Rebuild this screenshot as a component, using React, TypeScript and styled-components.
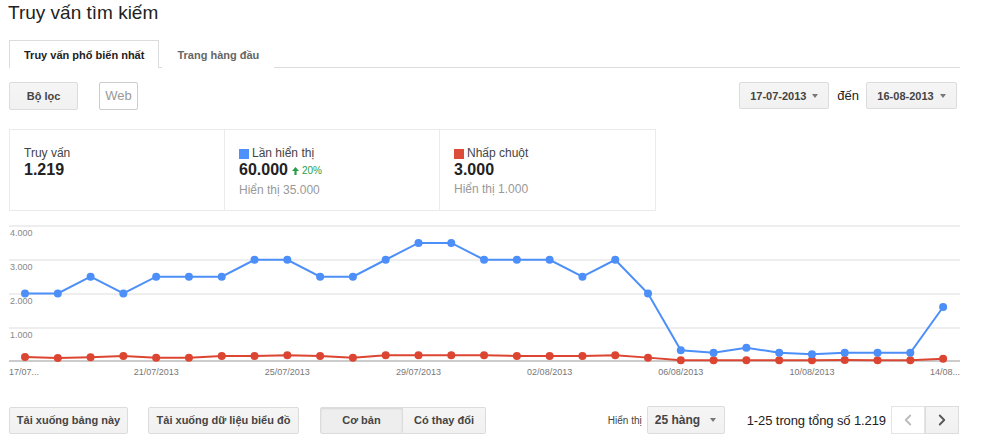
import styled, { createGlobalStyle } from "styled-components"
import { ChevronLeft, ChevronRight } from "lucide-react"

const GlobalStyle = createGlobalStyle`
  body {
    margin: 0;
    background: #fff;
    font-family: Arial, "Liberation Sans", sans-serif;
    color: #222;
  }
`

const impressions = [2000, 2000, 2500, 2000, 2500, 2500, 2500, 3000, 3000, 2500, 2500, 3000, 3500, 3500, 3000, 3000, 3000, 2500, 3000, 2000, 320, 245, 395, 245, 200, 245, 245, 245, 1600]
const clicks = [120, 90, 110, 150, 100, 100, 150, 150, 170, 150, 100, 170, 170, 170, 170, 150, 150, 150, 170, 100, 25, 25, 25, 25, 25, 30, 25, 25, 70]
const xLabels = [
  { i: 4, text: "21/07/2013" },
  { i: 8, text: "25/07/2013" },
  { i: 12, text: "29/07/2013" },
  { i: 16, text: "02/08/2013" },
  { i: 20, text: "06/08/2013" },
  { i: 24, text: "10/08/2013" },
]
const yLabels = ["4.000", "3.000", "2.000", "1.000"]

const px = (i: number) => 16 + i * 32.79
const py = (v: number) => 150 - v * (135 / 4000)

const App = () => {
  const bluePts = impressions.map((v, i) => `${px(i)},${py(v)}`).join(" ")
  const redPts = clicks.map((v, i) => `${px(i)},${py(v)}`).join(" ")

  return (
    <Page>
      <GlobalStyle />
      <Title>Truy vấn tìm kiếm</Title>
      <Tabs>
        <Tab active>Truy vấn phổ biến nhất</Tab>
        <Tab>Trang hàng đầu</Tab>
      </Tabs>

      <FilterRow>
        <Left>
          <Button width={69} height={28}>Bộ lọc</Button>
          <WebBox>Web</WebBox>
        </Left>
        <Left>
          <Button width={90} height={27}>17-07-2013 <Caret /></Button>
          <Between>đến</Between>
          <Button width={91} height={27}>16-08-2013 <Caret /></Button>
        </Left>
      </FilterRow>

      <Stats>
        <Cell>
          <Label>Truy vấn</Label>
          <Value>1.219</Value>
        </Cell>
        <Cell>
          <Label><Swatch color="#4d90fe" />Lần hiển thị</Label>
          <Value>
            60.000
            <Change>
              <svg width="7" height="8" viewBox="0 0 7 8">
                <path d="M3.5 0 L7 4 L4.6 4 L4.6 8 L2.4 8 L2.4 4 L0 4 Z" fill="#2a9d4a" />
              </svg>
              20%
            </Change>
          </Value>
          <Sub>Hiển thị 35.000</Sub>
        </Cell>
        <Cell>
          <Label><Swatch color="#dd4b39" />Nhấp chuột</Label>
          <Value>3.000</Value>
          <Sub>Hiển thị 1.000</Sub>
        </Cell>
      </Stats>

      <Chart width="951" height="175" viewBox="0 0 951 175">
        {[15, 49, 83, 117].map((y) => (
          <line key={y} x1="0" x2="951" y1={y} y2={y} stroke="#dedede" strokeWidth="1.2" />
        ))}
        {yLabels.map((t, k) => (
          <text key={t} x="1" y={25 + k * 34} fontSize="9" fill="#888" fontFamily="Arial, 'Liberation Sans', sans-serif">{t}</text>
        ))}
        <line x1="0" x2="951" y1="150" y2="150" stroke="#999" strokeWidth="1" />
        <polyline points={redPts} fill="none" stroke="#dc4532" strokeWidth="2" />
        {clicks.map((v, i) => <circle key={"r" + i} cx={px(i)} cy={py(v)} r="4" fill="#dc4532" />)}
        <polyline points={bluePts} fill="none" stroke="#4d8ff8" strokeWidth="2" />
        {impressions.map((v, i) => <circle key={"b" + i} cx={px(i)} cy={py(v)} r="4" fill="#4d8ff8" />)}
        <text x="0" y="164" fontSize="9" fill="#777" fontFamily="Arial, 'Liberation Sans', sans-serif">17/07...</text>
        {xLabels.map((l) => (
          <text key={l.text} x={px(l.i)} y="164" textAnchor="middle" fontSize="9" fill="#777" fontFamily="Arial, 'Liberation Sans', sans-serif">{l.text}</text>
        ))}
        <text x="951" y="164" textAnchor="end" fontSize="9" fill="#777" fontFamily="Arial, 'Liberation Sans', sans-serif">14/08...</text>
      </Chart>

      <BottomRow>
        <Left>
          <Button width={119} height={27}>Tải xuống bảng này</Button>
          <Gap />
          <Button width={151} height={27}>Tải xuống dữ liệu biểu đồ</Button>
          <Gap />
          <Segment>
            <SegButton pressed>Cơ bản</SegButton>
            <SegButton>Có thay đổi</SegButton>
          </Segment>
        </Left>
        <Left>
          <Small>Hiển thị</Small>
          <Select>25 hàng <Caret /></Select>
          <Range>1-25 trong tổng số 1.219</Range>
          <Pager>
            <PageButton disabled><ChevronLeft size={18} strokeWidth={2.4} /></PageButton>
            <PageButton><ChevronRight size={18} strokeWidth={2.4} /></PageButton>
          </Pager>
        </Left>
      </BottomRow>
    </Page>
  )
}

export default App

const Page = styled.div`
  width: 951px;
  padding: 0 0 0 9px;
  font-family: Arial, "Liberation Sans", sans-serif;
`

const Title = styled.h1`
  margin: 0 0 0 -1px;
  font-weight: normal;
  font-size: 19px;
  line-height: 26px;
  color: #222;
`

const Tabs = styled.div`
  display: flex;
  margin-top: 14px;
  height: 27px;
  border-bottom: 1px solid #dcdcdc;
`

const Tab = styled.div<{ active?: boolean }>`
  display: flex;
  align-items: center;
  padding: 0 14px;
  margin-right: 3px;
  font-size: 11px;
  font-weight: bold;
  color: ${(p) => (p.active ? "#222" : "#666")};
  background: #fff;
  border: 1px solid ${(p) => (p.active ? "#dcdcdc" : "transparent")};
  border-bottom: none;
  margin-bottom: -1px;
  height: 28px;
  box-sizing: border-box;
`

const FilterRow = styled.div`
  display: flex;
  justify-content: space-between;
  align-items: center;
  margin-top: 13px;
  padding-right: 3px;
  height: 29px;
`

const Left = styled.div`
  display: flex;
  align-items: center;
`

const Button = styled.div<{ width: number; height: number }>`
  display: flex;
  align-items: center;
  justify-content: center;
  gap: 6px;
  box-sizing: border-box;
  width: ${(p) => p.width}px;
  height: ${(p) => p.height}px;
  background: linear-gradient(#f5f5f5, #f1f1f1);
  border: 1px solid #dcdcdc;
  border-radius: 2px;
  font-size: 11px;
  font-weight: bold;
  color: #444;
  white-space: nowrap;
`

const Caret = styled.span`
  width: 0;
  height: 0;
  border-left: 3.5px solid transparent;
  border-right: 3.5px solid transparent;
  border-top: 4px solid #777;
`

const WebBox = styled.div`
  display: flex;
  align-items: center;
  justify-content: center;
  box-sizing: border-box;
  margin-left: 21px;
  width: 39px;
  height: 28px;
  border: 1px solid #ccc;
  border-radius: 2px;
  font-size: 13px;
  color: #999;
`

const Between = styled.span`
  font-size: 13px;
  color: #222;
  margin: 0 7px 0 8px;
`

const Stats = styled.div`
  display: grid;
  grid-template-columns: repeat(3, 215px);
  width: 647px;
  box-sizing: border-box;
  margin-top: 19px;
  height: 82px;
  border: 1px solid #ebebeb;
`

const Cell = styled.div`
  padding: 16px 14px 0;
  border-right: 1px solid #ebebeb;
  &:last-child {
    border-right: none;
  }
`

const Label = styled.div`
  display: flex;
  align-items: center;
  gap: 3px;
  font-size: 12px;
  color: #444;
  line-height: 15px;
`

const Swatch = styled.span<{ color: string }>`
  display: inline-block;
  width: 10px;
  height: 10px;
  background: ${(p) => p.color};
`

const Value = styled.div`
  display: flex;
  align-items: baseline;
  font-size: 16px;
  font-weight: bold;
  color: #222;
  line-height: 18px;
`

const Change = styled.span`
  display: inline-flex;
  align-items: center;
  gap: 3px;
  margin-left: 4px;
  font-size: 10px;
  font-weight: normal;
  color: #2a9d4a;
`

const Sub = styled.div`
  font-size: 12px;
  color: #999;
  line-height: 16px;
  margin-top: 2px;
`

const Chart = styled.svg`
  display: block;
  margin-top: 0;
`

const BottomRow = styled.div`
  display: flex;
  justify-content: space-between;
  align-items: center;
  margin-top: 20px;
  padding-right: 1px;
`

const Gap = styled.div`
  width: 20px;
`

const Segment = styled.div`
  display: flex;
  margin-left: 1px;
`

const SegButton = styled.div<{ pressed?: boolean }>`
  display: flex;
  align-items: center;
  justify-content: center;
  width: 83px;
  height: 27px;
  box-sizing: border-box;
  font-size: 11px;
  font-weight: bold;
  color: #444;
  border: 1px solid #dcdcdc;
  background: ${(p) => (p.pressed ? "#eee" : "linear-gradient(#f5f5f5, #f1f1f1)")};
  box-shadow: ${(p) => (p.pressed ? "inset 0 1px 2px rgba(0,0,0,.1)" : "none")};
  &:first-child {
    border-radius: 2px 0 0 2px;
  }
  &:last-child {
    border-left: none;
    border-radius: 0 2px 2px 0;
  }
`

const Small = styled.span`
  font-size: 10px;
  color: #444;
  margin-right: 5px;
`

const Select = styled.div`
  display: flex;
  align-items: center;
  justify-content: space-between;
  box-sizing: border-box;
  width: 78px;
  height: 28px;
  padding: 0 8px 0 7px;
  background: linear-gradient(#f5f5f5, #f1f1f1);
  border: 1px solid #dcdcdc;
  border-radius: 2px;
  font-size: 12px;
  font-weight: bold;
  color: #444;
`

const Range = styled.span`
  font-size: 13px;
  letter-spacing: -0.1px;
  color: #222;
  margin: 0 5px 0 22px;
`

const Pager = styled.div`
  display: flex;
`

const PageButton = styled.div<{ disabled?: boolean }>`
  display: flex;
  align-items: center;
  justify-content: center;
  box-sizing: border-box;
  width: 34px;
  height: 28px;
  border: 1px solid #e5e5e5;
  background: ${(p) => (p.disabled ? "#fff" : "linear-gradient(#f5f5f5, #f1f1f1)")};
  color: ${(p) => (p.disabled ? "#bbb" : "#555")};
  &:last-child {
    border-left: 1px solid #dcdcdc;
    border-color: #dcdcdc;
  }
`
